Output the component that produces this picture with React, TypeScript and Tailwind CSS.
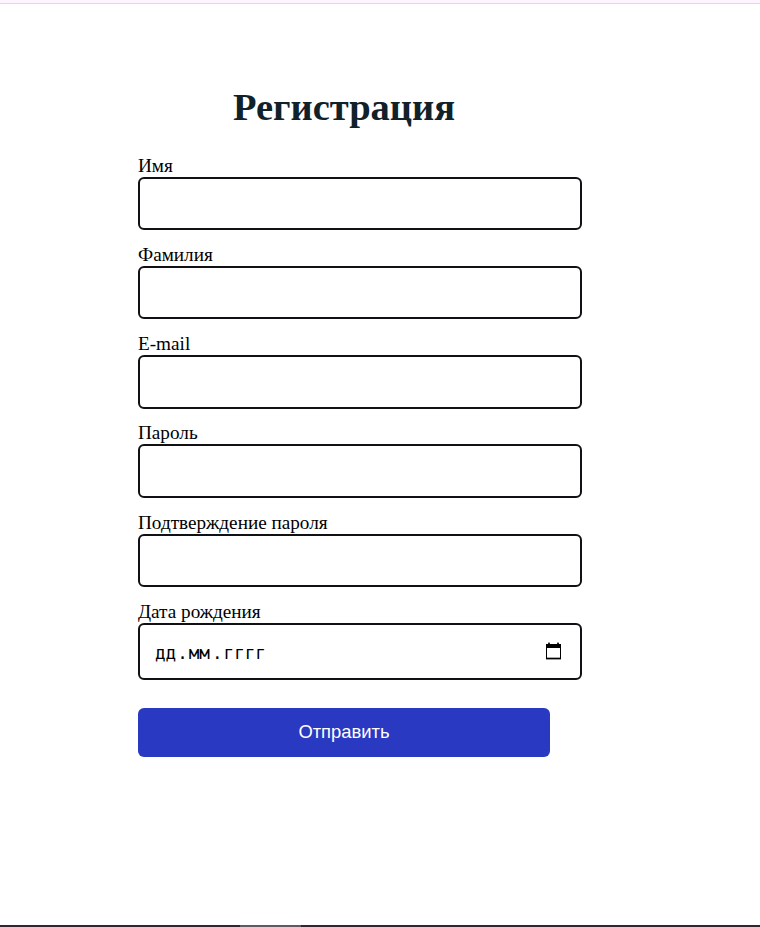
type FieldProps = { id: string; label: string; type: string; height: string };

const fields: FieldProps[] = [
  { id: "name", label: "Имя", type: "text", height: "h-[53px] mb-[14px]" },
  { id: "surname", label: "Фамилия", type: "text", height: "h-[53px] mb-[14px]" },
  { id: "email", label: "E-mail", type: "email", height: "h-[54px] mb-[13px]" },
  { id: "password", label: "Пароль", type: "password", height: "h-[54px] mb-[14px]" },
  { id: "confirm", label: "Подтверждение пароля", type: "password", height: "h-[53px] mb-[14px]" },
];

function Field({ id, label, type, height }: FieldProps) {
  return (
    <>
      <label htmlFor={id} className="block h-[22px] whitespace-nowrap leading-[22px]">
        {label}
      </label>
      <input
        id={id}
        type={type}
        className={`block w-[444px] rounded-[6px] border-2 border-[#111014] bg-white px-[15px] outline-none ${height}`}
      />
    </>
  );
}

function CalendarIcon() {
  return (
    <svg width="15" height="19" viewBox="0 0 15 19" shapeRendering="crispEdges" aria-hidden="true">
      <path d="M2 0h2v1H2zM11 0h2v1h-2z" fill="#aaa" />
      <path d="M2 1h2v1H2zM11 1h2v1h-2z" fill="#222" />
      <path d="M0 2h15v15H0zM1 6v10h13V6z" fill="#000" fillRule="evenodd" />
      <path d="M1 15h13v1H1z" fill="#aaa" />
      <path d="M0 17h15v1H0z" fill="#999" />
    </svg>
  );
}

export default function App() {
  return (
    <div className="flex h-[927px] w-[760px] flex-col overflow-hidden bg-white font-['Liberation_Serif',serif] text-[19.2px] text-black">
      <div className="h-1 shrink-0 border-b border-[#e0dae4] bg-[#fdf4ff]" />
      <form className="ml-[138px] flex w-[444px] flex-1 flex-col pt-[80px]" onSubmit={(e) => e.preventDefault()}>
        <h1 className="mb-[25px] h-[46px] w-[412px] text-center text-[38.5px] font-bold leading-[46px] text-[#10212a]">
          Регистрация
        </h1>
        {fields.map((field) => (
          <Field key={field.id} {...field} />
        ))}
        <span className="block h-[22px] leading-[22px]">Дата рождения</span>
        <div className="flex h-[57px] items-center justify-between rounded-[6px] border-2 border-[#111014] pl-[15px] pr-[19px]">
          <span className="flex pt-[2px] font-['DejaVu_Sans_Mono',monospace] text-[17.6px] leading-6">
            <span className="pr-[1px]">дд</span>
            <span>.</span>
            <span className="px-[1px]">мм</span>
            <span className="pl-[1px]">.</span>
            <span className="px-[1px]">гггг</span>
          </span>
          <CalendarIcon />
        </div>
        <button
          type="submit"
          className="mt-7 h-[49px] w-[412px] rounded-[6px] bg-[#2939c1] pb-[2px] font-['Liberation_Sans',sans-serif] text-[18.4px] text-white"
        >
          Отправить
        </button>
      </form>
      <div className="flex h-0.5 shrink-0 bg-[#33242f]">
        <div className="ml-[240px] w-[61px] bg-[#625860]" />
      </div>
    </div>
  );
}
